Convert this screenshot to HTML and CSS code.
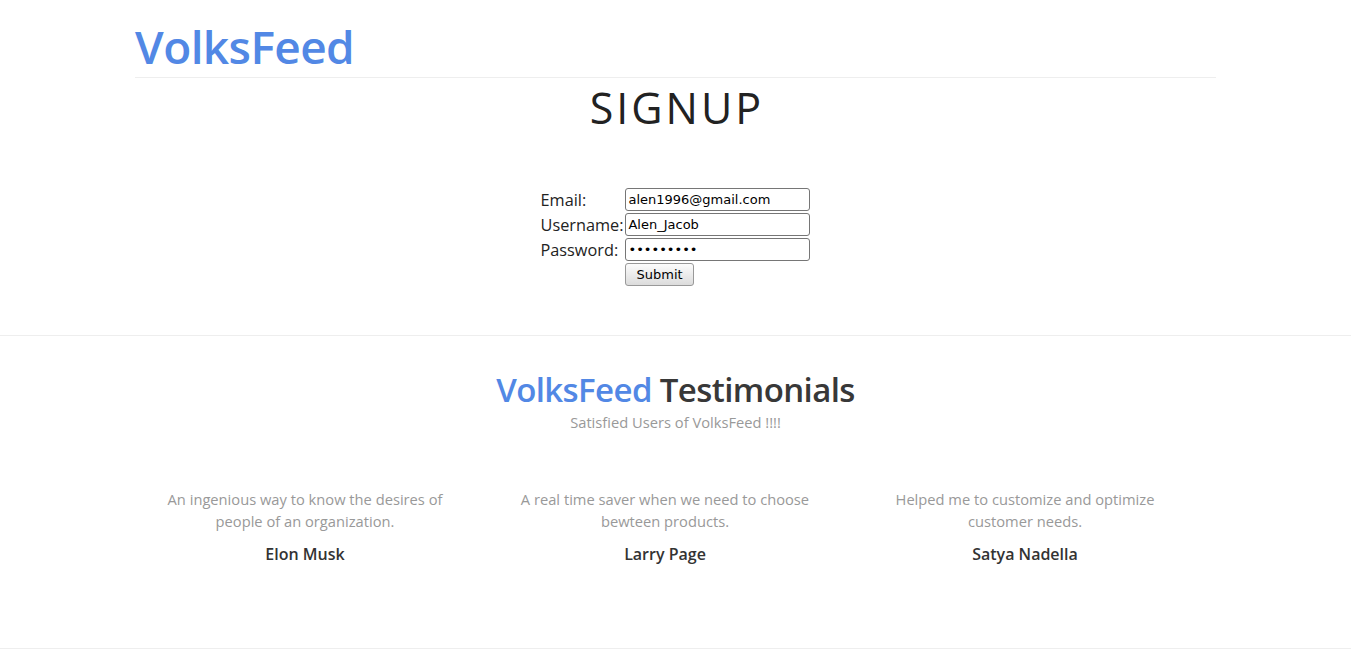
FILE: index.html
```html
<!DOCTYPE html>
<html>
<head>
<meta charset="utf-8">
<link rel="stylesheet" href="styles.css">
</head>
<body>
<div class="page">
  <header class="topbar">
    <h1 class="brand">VolksFeed</h1>
  </header>
  <section class="signup">
    <h2 class="signup-title">SIGNUP</h2>
    <form class="signup-form">
      <table class="form-table">
        <tr><td class="lbl">Email:</td><td><input class="field" type="text" value="alen1996@gmail.com"></td></tr>
        <tr><td class="lbl">Username:</td><td><input class="field" type="text" value="Alen_Jacob"></td></tr>
        <tr><td class="lbl">Password:</td><td><input class="field" type="password" value="123456789"></td></tr>
        <tr><td></td><td><button class="submit" type="button">Submit</button></td></tr>
      </table>
    </form>
  </section>
  <hr class="rule">
  <section class="testimonials">
    <h2 class="t-title"><span class="blue">VolksFeed</span> Testimonials</h2>
    <p class="t-sub">Satisfied Users of VolksFeed !!!!</p>
    <div class="t-row">
      <div class="t-col">
        <p class="quote">An ingenious way to know the desires of people of an organization.</p>
        <p class="name">Elon Musk</p>
      </div>
      <div class="t-col">
        <p class="quote">A real time saver when we need to choose bewteen products.</p>
        <p class="name">Larry Page</p>
      </div>
      <div class="t-col">
        <p class="quote">Helped me to customize and optimize customer needs.</p>
        <p class="name">Satya Nadella</p>
      </div>
    </div>
  </section>
  <hr class="rule rule-bottom">
</div>
</body>
</html>
```
FILE: styles.css
```css
html, body { margin: 0; padding: 0; background: #fff; }
body { font-family: "Open Sans", sans-serif; overflow: hidden; }
.page { width: 1351px; }
.topbar { width: 80%; margin: 0 auto; border-bottom: 1px solid #eee; height: 77px; display: flex; align-items: flex-end; }
.brand { margin: 0 0 8px 0; font-size: 46px; font-weight: 600; letter-spacing: -0.6px; color: #5288e5; line-height: 1; }
.signup { text-align: center; }
.signup-title { margin: 0; padding: 1px 0 0 3px; font-size: 43px; font-weight: 400; letter-spacing: 3px; color: #222; line-height: 58px; }
.signup-form { display: flex; justify-content: center; margin-top: 51px; }
.form-table { border-collapse: collapse; text-align: left; }
.form-table td { padding: 0 0 2px 0; height: 23px; }
.form-table td.lbl { padding-right: 2px; }
.lbl { font-size: 16.3px; color: #222; vertical-align: middle; line-height: 22px; }
.field { display: block; box-sizing: border-box; width: 185px; height: 23px; margin: 0; border: 1px solid #767676; border-radius: 3px; font-family: "DejaVu Sans", sans-serif; font-size: 13px; padding: 1px 2px; color: #000; }
.submit { display: block; box-sizing: border-box; height: 23px; margin: 0; padding: 0 10px; border: 1px solid #999; border-radius: 3px; background: linear-gradient(#fcfcfc, #dcdcdc); font-family: "DejaVu Sans", sans-serif; font-size: 13px; color: #000; }
.rule { margin: 47px 0 0 0; border: 0; border-top: 1px solid #eee; height: 0; }
.testimonials { text-align: center; }
.t-title { margin: 0; padding-top: 32px; font-size: 33px; font-weight: 600; letter-spacing: -0.6px; color: #383838; line-height: 44px; }
.blue { color: #5288e5; }
.t-sub { margin: 0; font-size: 14.7px; color: #999; line-height: 20px; }
.t-row { display: flex; width: 1080px; margin: 0 0 0 125px; padding-top: 56px; }
.t-col { width: 360px; padding: 0 30px; box-sizing: border-box; }
.quote { margin: 0; font-size: 14.7px; color: #999; line-height: 22px; }
.name { margin: 11px 0 0; font-size: 16px; font-weight: 600; color: #333; line-height: 22px; }
.rule-bottom { margin-top: 83px; }
```
